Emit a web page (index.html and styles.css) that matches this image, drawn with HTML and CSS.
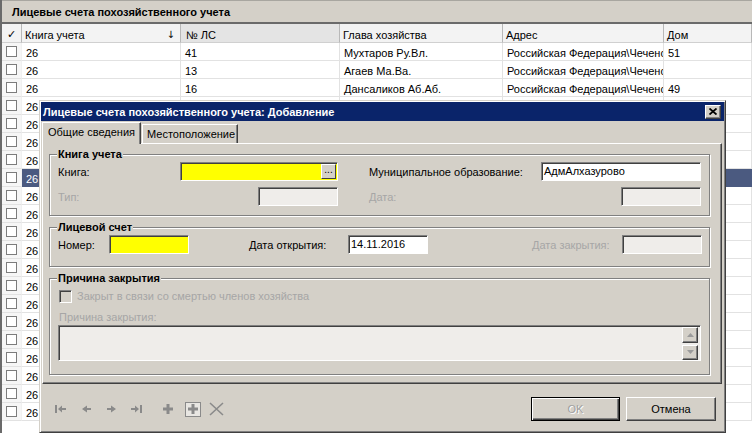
FILE: index.html
```html
<!DOCTYPE html>
<html lang="ru">
<head>
<meta charset="utf-8">
<title>Лицевые счета</title>
<link rel="stylesheet" href="styles.css">
</head>
<body>
<div class="screen">
  <div class="list-title">Лицевые счета похозяйственного учета</div>
  <div class="grid">
    <div class="grow ghead">
      <div class="c chk">✓</div>
      <div class="c sortcol"><span>Книга учета</span><span class="sort">↓</span></div>
      <div class="c hot">№ ЛС</div>
      <div class="c">Глава хозяйства</div>
      <div class="c">Адрес</div>
      <div class="c">Дом</div>
    </div>
    <div class="grow"><div class="c chk"><span class="cb"></span></div><div class="c">26</div><div class="c">41</div><div class="c">Мухтаров Ру.Вл.</div><div class="c">Российская Федерация\Чеченская Республика</div><div class="c">51</div></div>
    <div class="grow"><div class="c chk"><span class="cb"></span></div><div class="c">26</div><div class="c">13</div><div class="c">Агаев Ма.Ва.</div><div class="c">Российская Федерация\Чеченская Республика</div><div class="c"></div></div>
    <div class="grow"><div class="c chk"><span class="cb"></span></div><div class="c">26</div><div class="c">16</div><div class="c">Дансаликов Аб.Аб.</div><div class="c">Российская Федерация\Чеченская Республика</div><div class="c">49</div></div>
    <div class="grow"><div class="c chk"><span class="cb"></span></div><div class="c">26</div><div class="c"></div><div class="c"></div><div class="c"></div><div class="c"></div></div>
    <div class="grow"><div class="c chk"><span class="cb"></span></div><div class="c">26</div><div class="c"></div><div class="c"></div><div class="c"></div><div class="c"></div></div>
    <div class="grow"><div class="c chk"><span class="cb"></span></div><div class="c">26</div><div class="c"></div><div class="c"></div><div class="c"></div><div class="c"></div></div>
    <div class="grow"><div class="c chk"><span class="cb"></span></div><div class="c">26</div><div class="c"></div><div class="c"></div><div class="c"></div><div class="c"></div></div>
    <div class="grow selected"><div class="c chk"><span class="cb"></span></div><div class="c">26</div><div class="c"></div><div class="c"></div><div class="c"></div><div class="c"></div></div>
    <div class="grow"><div class="c chk"><span class="cb"></span></div><div class="c">26</div><div class="c"></div><div class="c"></div><div class="c"></div><div class="c"></div></div>
    <div class="grow"><div class="c chk"><span class="cb"></span></div><div class="c">26</div><div class="c"></div><div class="c"></div><div class="c"></div><div class="c"></div></div>
    <div class="grow"><div class="c chk"><span class="cb"></span></div><div class="c">26</div><div class="c"></div><div class="c"></div><div class="c"></div><div class="c"></div></div>
    <div class="grow"><div class="c chk"><span class="cb"></span></div><div class="c">26</div><div class="c"></div><div class="c"></div><div class="c"></div><div class="c"></div></div>
    <div class="grow"><div class="c chk"><span class="cb"></span></div><div class="c">26</div><div class="c"></div><div class="c"></div><div class="c"></div><div class="c"></div></div>
    <div class="grow"><div class="c chk"><span class="cb"></span></div><div class="c">26</div><div class="c"></div><div class="c"></div><div class="c"></div><div class="c"></div></div>
    <div class="grow"><div class="c chk"><span class="cb"></span></div><div class="c">26</div><div class="c"></div><div class="c"></div><div class="c"></div><div class="c"></div></div>
    <div class="grow"><div class="c chk"><span class="cb"></span></div><div class="c">26</div><div class="c"></div><div class="c"></div><div class="c"></div><div class="c"></div></div>
    <div class="grow"><div class="c chk"><span class="cb"></span></div><div class="c">26</div><div class="c"></div><div class="c"></div><div class="c"></div><div class="c"></div></div>
    <div class="grow"><div class="c chk"><span class="cb"></span></div><div class="c">26</div><div class="c"></div><div class="c"></div><div class="c"></div><div class="c"></div></div>
    <div class="grow"><div class="c chk"><span class="cb"></span></div><div class="c">26</div><div class="c"></div><div class="c"></div><div class="c"></div><div class="c"></div></div>
    <div class="grow"><div class="c chk"><span class="cb"></span></div><div class="c">26</div><div class="c"></div><div class="c"></div><div class="c"></div><div class="c"></div></div>
    <div class="grow"><div class="c chk"><span class="cb"></span></div><div class="c">26</div><div class="c"></div><div class="c"></div><div class="c"></div><div class="c"></div></div>
  </div>

  <div class="dialog">
    <div class="caption">
      <span class="caption-text">Лицевые счета похозяйственного учета: Добавление</span>
      <span class="close"><svg width="8" height="7" viewBox="0 0 8 7"><path d="M0.5 0.5 L7.5 6.5 M7.5 0.5 L0.5 6.5" stroke="#000" stroke-width="1.8" fill="none"/></svg></span>
    </div>
    <div class="tabs">
      <div class="tab active">Общие сведения</div>
      <div class="tab">Местоположение</div>
    </div>
    <div class="page">
      <fieldset class="group g1">
        <legend>Книга учета</legend>
        <div class="pairs">
          <div class="field"><span class="lbl">Книга:</span><span class="combo"><span class="combo-fill"></span><span class="dots">...</span></span></div>
          <div class="field"><span class="lbl">Муниципальное образование:</span><span class="input w160">АдмАлхазурово</span></div>
          <div class="field off"><span class="lbl">Тип:</span><span class="input w80"></span></div>
          <div class="field off"><span class="lbl">Дата:</span><span class="input w80"></span></div>
        </div>
      </fieldset>
      <fieldset class="group g2">
        <legend>Лицевой счет</legend>
        <div class="acc">
          <span class="lbl">Номер:</span>
          <span class="input req"></span>
          <span class="lbl at4">Дата открытия:</span>
          <span class="input">14.11.2016</span>
          <span class="lbl at7 off">Дата закрытия:</span>
          <span class="input dis"></span>
        </div>
      </fieldset>
      <fieldset class="group g3">
        <legend>Причина закрытия</legend>
        <div class="check-row off"><span class="check"></span><span>Закрыт в связи со смертью членов хозяйства</span></div>
        <div class="memo-label off">Причина закрытия:</div>
        <div class="memo">
          <div class="spin">
            <span class="sb"><svg width="7" height="4" viewBox="0 0 7 4"><path d="M0 4 L3.5 0 L7 4 Z" fill="#9a9a9a"/></svg></span>
            <span class="sb"><svg width="7" height="4" viewBox="0 0 7 4"><path d="M0 0 L3.5 4 L7 0 Z" fill="#9a9a9a"/></svg></span>
          </div>
        </div>
      </fieldset>
    </div>
    <div class="footer">
      <div class="nav">
        <svg class="ico first" width="12" height="8" viewBox="0 0 12 8"><rect x="0" y="0" width="2" height="8"/><path d="M3 4 L7 0.5 L7 3 L11 3 L11 5 L7 5 L7 7.5 Z"/></svg>
        <svg class="ico prev" width="9" height="8" viewBox="0 0 9 8"><path d="M0 4 L5 0.5 L5 3 L9 3 L9 5 L5 5 L5 7.5 Z"/></svg>
        <svg class="ico next" width="9" height="8" viewBox="0 0 9 8"><path d="M9 4 L4 0.5 L4 3 L0 3 L0 5 L4 5 L4 7.5 Z"/></svg>
        <svg class="ico last" width="12" height="8" viewBox="0 0 12 8"><path d="M8 4 L4 0.5 L4 3 L0 3 L0 5 L4 5 L4 7.5 Z"/><rect x="9" y="0" width="2" height="8"/></svg>
        <svg class="ico plus" width="10" height="10" viewBox="0 0 10 10"><path d="M3.5 0 H6.5 V3.5 H10 V6.5 H6.5 V10 H3.5 V6.5 H0 V3.5 H3.5 Z"/></svg>
        <span class="boxed"><svg width="10" height="10" viewBox="0 0 10 10"><path d="M3.5 0 H6.5 V3.5 H10 V6.5 H6.5 V10 H3.5 V6.5 H0 V3.5 H3.5 Z" fill="#8a8a8a"/></svg></span>
        <svg class="ico del" width="15" height="14" viewBox="0 0 15 14"><path d="M1 1 L14 13 M14 1 L1 13" stroke="#8a8a8a" stroke-width="1.6" fill="none"/></svg>
      </div>
      <div class="buttons">
        <span class="btn default">OK</span>
        <span class="btn">Отмена</span>
      </div>
    </div>
  </div>
</div>
</body>
</html>
```

FILE: styles.css
```css
* { box-sizing: border-box; }
html, body { margin: 0; padding: 0; }
body {
  width: 752px;
  height: 433px;
  overflow: hidden;
  background: #fff;
  font-family: "Liberation Sans", Arial, sans-serif;
  font-size: 11px;
  color: #000;
}
.screen {
  position: relative;
  width: 752px;
  height: 433px;
  overflow: hidden;
  border-left: 2px solid #6a6a6a;
}
.list-title {
  height: 24px;
  padding-left: 10px;
  line-height: 23px;
  font-weight: bold;
  background: #d4d0c8;
  border-top: 1px solid #a8a6a0;
  border-bottom: 2px solid #6a6a6a;
}

/* grid */
.grow {
  display: grid;
  grid-template-columns: 20px 159px 159px 163px 161px 1fr;
  height: 18px;
}
.c {
  padding: 1px 4px 0;
  line-height: 18px;
  white-space: nowrap;
  overflow: hidden;
  text-overflow: clip;
  border-right: 1px solid #e2e2e2;
  border-bottom: 1px solid #e2e2e2;
  background: #fff;
}
.c.chk {
  padding: 0;
  display: flex;
  align-items: center;
  justify-content: center;
  background: #f6f6f6;
  border-right: 1px solid #f0f0f0;
}
.cb {
  width: 11px;
  height: 11px;
  border: 1px solid #7c7c7c;
  background: #fff;
}
.ghead { height: 19px; }
.ghead .c {
  background: #f3f3f3;
  border-right: 1px solid #b8b8b8;
  border-bottom: 1px solid #d0d0d0;
  line-height: 18px;
  padding: 2px 4px 0 3px;
}
.ghead .c.chk { background: #f3f3f3; border-right: 1px solid #b8b8b8; padding: 2px 0 0; }
.ghead .c.hot { background: #e4e4e4; padding-left: 5px; }
.sortcol { display: flex; justify-content: space-between; }
.ghead .sortcol { padding-right: 5px; }
.sort { font-family: "DejaVu Sans", sans-serif; font-size: 10px; }
.selected .c:not(.chk) { background: #4b5a80; color: #fff; border-color: #4b5a80; }

/* dialog window */
.dialog {
  position: absolute;
  left: 37px;
  top: 100px;
  width: 687px;
  height: 333px;
  display: flex;
  flex-direction: column;
  padding: 1px;
  background: #d4d0c8;
  border: 1px solid;
  border-color: #d4d0c8 #404040 #404040 #d4d0c8;
  box-shadow: inset 1px 1px 0 #fff, inset -1px -1px 0 #808080;
}
.caption {
  height: 19px;
  flex: none;
  display: flex;
  align-items: center;
  justify-content: space-between;
  padding: 0 3px 0 2px;
  background: #0a246a;
  color: #fff;
  font-weight: bold;
}
.close {
  width: 16px;
  height: 14px;
  display: flex;
  align-items: center;
  justify-content: center;
  background: #d4d0c8;
  border: 1px solid;
  border-color: #fff #404040 #404040 #fff;
  box-shadow: inset -1px -1px 0 #808080;
}
.tabs {
  height: 22px;
  flex: none;
  display: flex;
  align-items: flex-end;
  padding-left: 1px;
}
.tab {
  height: 19px;
  padding-left: 4px;
  line-height: 18px;
  border: 1px solid;
  border-bottom: none;
  border-color: #fff #404040 #fff #fff;
  box-shadow: inset -1px 0 0 #808080;
  width: 96px;
  margin-left: 1px;
}
.tab.active {
  position: relative;
  z-index: 1;
  height: 22px;
  width: 99px;
  margin: 0 0 -1px 0;
  padding-left: 5px;
  line-height: 19px;
  background: #d4d0c8;
}
.page {
  height: 241px;
  flex: none;
  margin: 0 2px 0 1px;
  padding: 3px 11px 0 6px;
  border: 1px solid;
  border-color: #fff #404040 #404040 #fff;
  box-shadow: inset -1px -1px 0 #808080;
}

/* group boxes */
.group {
  margin: 0 0 4px;
  padding: 0 8px;
  border: 1px solid #808080;
  box-shadow: inset 1px 1px 0 #fff, 1px 1px 0 #fff;
  min-width: 0;
}
.group legend {
  margin-left: -1px;
  padding: 0 1px;
  line-height: 14px;
  font-weight: bold;
  background: #d4d0c8;
}
.g1 { height: 69px; }
.g2 { height: 47px; }
.g3 { height: 104px; }

.lbl { white-space: nowrap; }
.off, .off .lbl { color: #a6a6a6; }

.input {
  display: block;
  height: 19px;
  padding-left: 2px;
  line-height: 16px;
  background: #fff;
  border: 1px solid;
  border-color: #808080 #fff #fff #808080;
  box-shadow: inset 1px 1px 0 #404040;
  white-space: nowrap;
  overflow: hidden;
}
.w80 { width: 80px; }
.w160 { width: 160px; }
.off .input, .input.dis { background: #efedea; }
.input.req { background: #ffff00; }

.pairs {
  display: grid;
  grid-template-columns: 280px 332px;
  column-gap: 31px;
  row-gap: 6px;
  padding-top: 1px;
}
.field {
  display: flex;
  align-items: center;
  justify-content: space-between;
}
.combo {
  display: flex;
  width: 158px;
  height: 19px;
  padding: 2px 1px 1px 2px;
  background: #ffff00;
  border: 1px solid;
  border-color: #808080 #fff #fff #808080;
  box-shadow: inset 1px 1px 0 #404040;
}
.combo-fill { flex: 1; }
.dots {
  width: 15px;
  height: 15px;
  margin-top: -1px;
  line-height: 10px;
  text-align: center;
  font-size: 10px;
  background: #d4d0c8;
  border: 1px solid;
  border-color: #fff #404040 #404040 #fff;
}

.acc {
  display: grid;
  grid-template-columns: 51px 80px 60px 99px 80px 104px 90px 80px;
  align-items: center;
  padding-top: 1px;
}
.acc .at4 { grid-column: 4; }
.acc .at7 { grid-column: 7; }

.check-row {
  display: flex;
  align-items: center;
  gap: 5px;
  height: 16px;
  margin-top: 3px;
  padding-left: 1px;
}
.check {
  width: 13px;
  height: 13px;
  border: 1px solid;
  border-color: #808080 #fff #fff #808080;
  box-shadow: inset 1px 1px 0 #404040;
  background: #d4d0c8;
}
.memo-label {
  margin-top: 6px;
  padding-left: 1px;
  line-height: 14px;
}
.memo {
  display: flex;
  justify-content: flex-end;
  height: 36px;
  margin-top: 1px;
  padding: 1px 1px 0 0;
  background: #efedea;
  border: 1px solid;
  border-color: #808080 #fff #fff #808080;
  box-shadow: inset 1px 1px 0 #404040;
}
.spin { display: flex; flex-direction: column; gap: 2px; padding-right: 1px; }
.sb {
  width: 16px;
  height: 16px;
  display: flex;
  align-items: center;
  justify-content: center;
  background: #d4d0c8;
  border: 1px solid;
  border-color: #fff #404040 #404040 #fff;
  box-shadow: inset -1px -1px 0 #808080;
}

/* footer */
.footer {
  flex: 1;
  display: flex;
  justify-content: space-between;
  align-items: flex-start;
  padding: 13px 8px 0 14px;
}
.nav {
  display: flex;
  align-items: center;
  height: 24px;
  fill: #8a8a8a;
}
.ico { display: block; }
.prev { margin-left: 15px; }
.next { margin-left: 16px; }
.last { margin-left: 15px; }
.plus { margin-left: 20px; }
.boxed {
  width: 16px;
  height: 15px;
  margin-left: 12px;
  display: flex;
  align-items: center;
  justify-content: center;
  background: #e8e6e2;
  border: 1px solid #8a8a8a;
}
.del { margin-left: 8px; }
.buttons { display: flex; gap: 6px; }
.btn {
  width: 90px;
  height: 24px;
  display: flex;
  align-items: center;
  justify-content: center;
  background: #d4d0c8;
  border: 1px solid;
  border-color: #fff #404040 #404040 #fff;
  box-shadow: inset -1px -1px 0 #808080;
}
.btn.default {
  width: 89px;
  color: #a0a0a0;
  text-shadow: 1px 1px 0 #fff;
  border: 1px solid #000;
  box-shadow: inset 1px 1px 0 #fff, inset -1px -1px 0 #404040, inset -2px -2px 0 #808080;
}
```
